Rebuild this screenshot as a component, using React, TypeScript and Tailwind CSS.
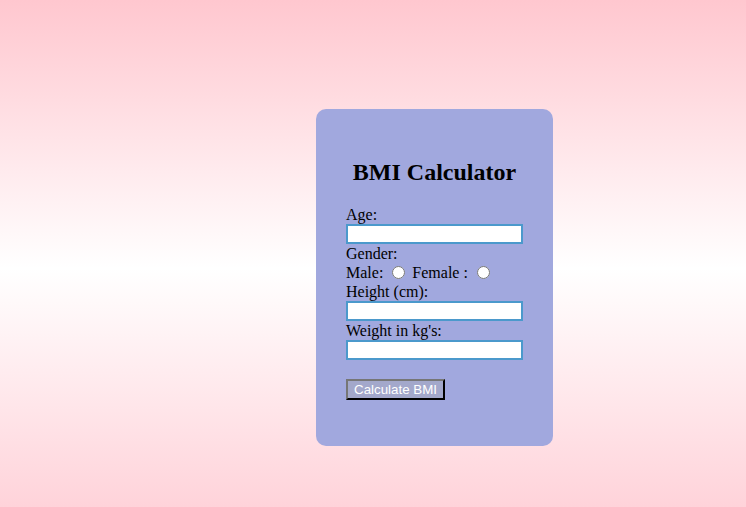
import React from 'react';

const App: React.FC = () => {
    return (
        <div className="min-h-[507px] w-full overflow-hidden bg-[linear-gradient(#ffc7cf,#ffffff_53%,#ffd3da)] pt-[109px] pl-[316px] font-['Liberation_Serif',serif] text-black">
            <div className="w-[237px] rounded-[10px] bg-[#a1a8de] pt-[49px] pb-[46px] px-[30px]">
                <h1 className="mb-[19px] text-center text-[24px] font-bold leading-[28px]">BMI Calculator</h1>
                <form className="text-[16px] leading-[19px]">
                    <label className="block">Age:</label>
                    <input type="text" className="block h-[20px] w-[177px] border-2 border-[#4b99cc] bg-white" />
                    <label className="block">Gender:</label>
                    <div className="h-[19px]">
                        Male:{' '}
                        <input type="radio" name="gender" className="ml-[5px] mr-[3px] mt-[3px] h-[13px] w-[13px] align-[-1px]" />{' '}
                        Female :{' '}
                        <input type="radio" name="gender" className="ml-[5px] mr-[3px] mt-[3px] h-[13px] w-[13px] align-[-1px]" />
                    </div>
                    <label className="block">Height (cm):</label>
                    <input type="text" className="block h-[20px] w-[177px] border-2 border-[#4b99cc] bg-white" />
                    <label className="block">Weight in kg's:</label>
                    <input type="text" className="block h-[20px] w-[177px] border-2 border-[#4b99cc] bg-white" />
                    <button
                        type="button"
                        className="mt-[19px] block h-[21px] border-2 border-t-[#767676] border-l-[#767676] border-b-black border-r-black bg-[#a3a8cb] px-[6px] font-['Liberation_Sans',sans-serif] text-[13.33px] leading-[15px] text-white"
                    >
                        Calculate BMI
                    </button>
                </form>
            </div>
        </div>
    );
};

export default App;
